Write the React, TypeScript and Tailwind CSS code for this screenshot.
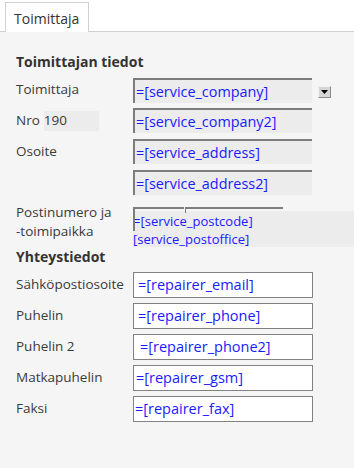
const labelCls = "w-[117px] shrink-0 text-[13.5px] leading-[19px] text-[#3a3a3a]";

function OldInput({ value }: { value: string }) {
  return (
    <div className="w-[179px] h-[25px] border-t-2 border-l-2 border-[#7d7d7d] bg-[#ececec] pl-px flex items-center text-[14.4px] text-[#1a1aff] whitespace-nowrap overflow-hidden">
      {value}
    </div>
  );
}

function TextInput({ value, indent = "pl-[4px]" }: { value: string; indent?: string }) {
  return (
    <div
      className={`w-[180px] h-[26px] border border-[#828282] bg-white flex items-center text-[14.5px] text-[#1a1aff] whitespace-nowrap ${indent}`}
    >
      {value}
    </div>
  );
}

function DropButton() {
  return (
    <div className="ml-[6px] mt-[8px] w-[13px] h-[12px] bg-[#d6d6d6] border border-t-[#f0f0f0] border-l-[#f0f0f0] border-r-[#8a8a8a] border-b-[#8a8a8a] flex items-center justify-center">
      <svg width="7" height="4" viewBox="0 0 7 4">
        <polygon points="0,0 7,0 3.5,4" fill="#000" />
      </svg>
    </div>
  );
}

export default function App() {
  const contacts = [
    { label: "Sähköpostiosoite", value: "=[repairer_email]", indent: "pl-[4px]" },
    { label: "Puhelin", value: "=[repairer_phone]", indent: "pl-[4px]" },
    { label: "Puhelin 2", value: "=[repairer_phone2]", indent: "pl-[6px]" },
    { label: "Matkapuhelin", value: "=[repairer_gsm]", indent: "pl-[2px]" },
    { label: "Faksi", value: "=[repairer_fax]", indent: "pl-[1px]" },
  ];

  return (
    <div
      className="w-[354px] h-[468px] bg-[#f5f5f5] flex flex-col"
      style={{ fontFamily: '"Open Sans", "Noto Sans", sans-serif' }}
    >
      <div className="bg-white h-[32px] pt-[2px] pl-[5px] border-b border-[#d0d0d0] flex">
        <div className="h-[30px] w-[84px] border border-b-0 border-[#d0d0d0] bg-white -mb-px pl-[8px] pt-[5px] text-[14px] text-[#333]">
          Toimittaja
        </div>
      </div>

      <div className="pl-[16px] pt-[20px] flex flex-col">
        <div className="text-[14px] font-bold text-[#333] leading-[19px]">Toimittajan tiedot</div>

        <div className="mt-[7px] flex">
          <div className={`${labelCls} pt-[2px]`}>Toimittaja</div>
          <OldInput value="=[service_company]" />
          <DropButton />
        </div>

        <div className="mt-[5px] flex">
          <div className={`${labelCls} flex items-center`}>
            <span>Nro</span>
            <span className="ml-[4px] w-[55px] h-[20px] bg-[#ececec] flex items-center">190</span>
          </div>
          <OldInput value="=[service_company2]" />
        </div>

        <div className="mt-[6px] flex">
          <div className={`${labelCls} pt-[3px]`}>Osoite</div>
          <OldInput value="=[service_address]" />
        </div>

        <div className="mt-[6px] flex">
          <div className={labelCls}></div>
          <OldInput value="=[service_address2]" />
        </div>

        <div className="mt-[7px] flex">
          <div className={`${labelCls} pt-[1px]`}>
            Postinumero ja
            <br />
            -toimipaikka
          </div>
          <div className="relative flex-1 pt-[9px]">
            <div className="absolute left-0 top-[5px] w-[51px] h-[24px] border-t-2 border-l-2 border-[#7d7d7d]" />
            <div className="absolute left-[52px] top-[5px] w-[98px] h-[6px] border-t-2 border-l border-[#7d7d7d]" />
            <div className="bg-[#ececec] h-[36px] pt-[1px] text-[13px] leading-[18px] text-[#1a1aff] whitespace-nowrap">
              <div>=[service_postcode]</div>
              <div>[service_postoffice]</div>
            </div>
          </div>
        </div>

        <div className="text-[14px] font-bold text-[#333] leading-[19px]">Yhteystiedot</div>

        <div className="mt-[6px] flex flex-col gap-[5px]">
          {contacts.map((c) => (
            <div key={c.label} className="flex">
              <div className={`${labelCls} pt-[3px]`}>{c.label}</div>
              <TextInput value={c.value} indent={c.indent} />
            </div>
          ))}
        </div>
      </div>
    </div>
  );
}
